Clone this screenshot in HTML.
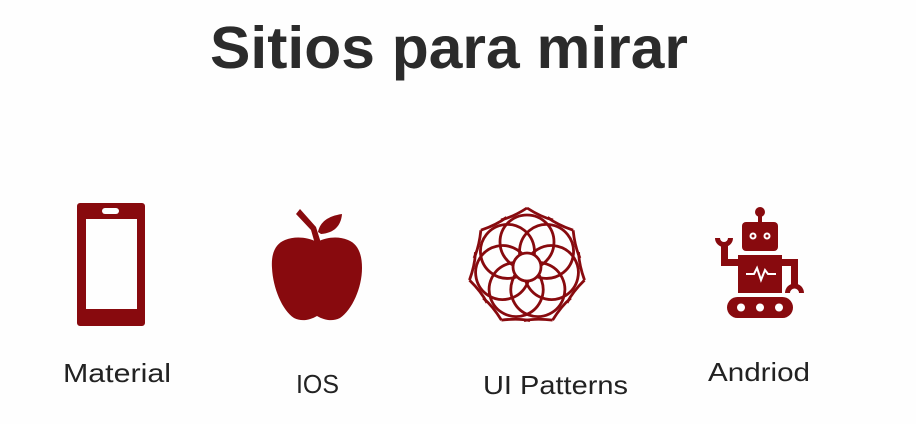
<!DOCTYPE html>
<html><head><meta charset="utf-8"><style>html,body{margin:0;padding:0;background:#fefefe;width:916px;height:424px;overflow:hidden}</style></head>
<body>
<svg width="916" height="424" viewBox="0 0 916 424" xmlns="http://www.w3.org/2000/svg">
<rect width="916" height="424" fill="#fefefe"/>
<text x="210" y="68" font-family="Liberation Sans, sans-serif" font-weight="bold" font-size="59" fill="#2b2b2b" textLength="478" lengthAdjust="spacingAndGlyphs">Sitios para mirar</text>
<g font-family="Liberation Sans, sans-serif" font-size="26" fill="#222">
<text x="63" y="382" textLength="108" lengthAdjust="spacingAndGlyphs">Material</text>
<text x="296" y="393" textLength="43" lengthAdjust="spacingAndGlyphs">IOS</text>
<text x="483" y="394" textLength="145" lengthAdjust="spacingAndGlyphs">UI Patterns</text>
<text x="708" y="381" textLength="102" lengthAdjust="spacingAndGlyphs">Andriod</text>
</g>
<g fill="#880a0e">
<path fill-rule="evenodd" d="M80 203h62a3 3 0 0 1 3 3v117a3 3 0 0 1-3 3h-62a3 3 0 0 1-3-3v-117a3 3 0 0 1 3-3zM86 219v90h51v-90z"/>
<rect x="102" y="208" width="17" height="6" rx="3" fill="#fefefe"/>
<path d="M317 242c-10-5-22-6-32-2c-10 4-14 14-13 28c1 20 10 42 22 50c8 4 16 2 23-2c7 4 15 6 23 2c12-8 22-30 22-50c0-14-4-24-14-28c-10-4-21-3-31 2z"/>
<path d="M296 214l4-5l16 18l5 16l-6 1l-4-14z"/>
<path d="M318 232c2-10 10-16 24-18c-1 12-8 19-21 20z"/>
<circle cx="760" cy="212" r="5"/>
<rect x="758" y="212" width="4" height="12"/>
<rect x="742" y="222" width="36" height="29" rx="4"/>
<circle cx="753" cy="236" r="3.5" fill="#fff"/><circle cx="767" cy="236" r="3.5" fill="#fff"/>
<circle cx="753" cy="236" r="1.5"/><circle cx="767" cy="236" r="1.5"/>
<rect x="738" y="255" width="44" height="38"/>
<path d="M746 274h8l3-6l4 12l4-10l3 4h8" fill="none" stroke="#fff" stroke-width="2"/>
<rect x="727" y="297" width="66" height="21" rx="10.5"/>
<circle cx="741" cy="307.5" r="4" fill="#fff"/><circle cx="760" cy="307.5" r="4" fill="#fff"/><circle cx="779" cy="307.5" r="4" fill="#fff"/>
<path d="M721 244v22h17v-7h-10v-15z"/>
<path d="M715 238a9 9 0 0 0 18 0h-5a4 4 0 0 1-8 0z"/>
<path d="M782 259h16v26h-7v-19h-9z"/>
<path d="M785 293a9.5 9.5 0 0 1 19 0h-5a4.5 4.5 0 0 0-9 0z"/>
</g>
<g fill="none" stroke="#880a0e" stroke-width="2.8" transform="translate(527,267)">
<g id="p"><circle cx="0" cy="-25" r="27"/></g>
<use href="#p" transform="rotate(51.43)"/><use href="#p" transform="rotate(102.86)"/><use href="#p" transform="rotate(154.29)"/><use href="#p" transform="rotate(205.71)"/><use href="#p" transform="rotate(257.14)"/><use href="#p" transform="rotate(308.57)"/>
<circle r="14" fill="#fefefe"/>
<g id="s"><path d="M0 -59Q14 -50 26 -47"/><path d="M0 -59Q-14 -50 -26 -47"/></g>
<use href="#s" transform="rotate(51.43)"/><use href="#s" transform="rotate(102.86)"/><use href="#s" transform="rotate(154.29)"/><use href="#s" transform="rotate(205.71)"/><use href="#s" transform="rotate(257.14)"/><use href="#s" transform="rotate(308.57)"/>
</g>
</svg>
</body></html>
